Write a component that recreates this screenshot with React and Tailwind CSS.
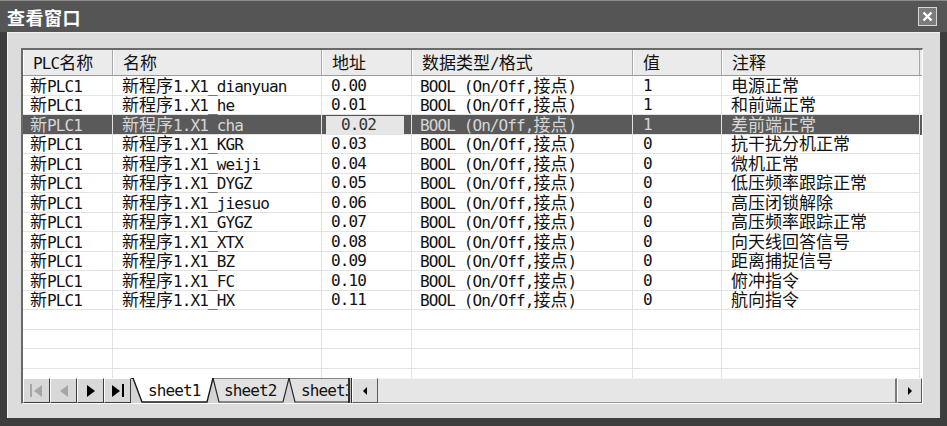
import React from "react";

const rows = [
  ["dianyuan", "0.00", "1", "电源正常"],
  ["he", "0.01", "1", "和前端正常"],
  ["cha", "0.02", "1", "差前端正常"],
  ["KGR", "0.03", "0", "抗干扰分机正常"],
  ["weiji", "0.04", "0", "微机正常"],
  ["DYGZ", "0.05", "0", "低压频率跟踪正常"],
  ["jiesuo", "0.06", "0", "高压闭锁解除"],
  ["GYGZ", "0.07", "0", "高压频率跟踪正常"],
  ["XTX", "0.08", "0", "向天线回答信号"],
  ["BZ", "0.09", "0", "距离捕捉信号"],
  ["FC", "0.10", "0", "俯冲指令"],
  ["HX", "0.11", "0", "航向指令"],
];

const cols = "grid grid-cols-[90px_209px_90px_221px_89px_198px]";

// SimSun-like mix: narrow half-width latin, full-width CJK
function Txt({ s }) {
  return (
    <span className="leading-[15px] whitespace-pre">
      {s.split(/([\u3000-\u9fff\uff00-\uffef]+)/).map((p, i) =>
        /[\u3000-\u9fff\uff00-\uffef]/.test(p) ? (
          <span key={i} className="font-['Noto_Sans_CJK_SC',sans-serif] text-[17px] tracking-normal">
            {p}
          </span>
        ) : (
          <span key={i}>{p}</span>
        )
      )}
    </span>
  );
}

function Cell({ children, className = "" }) {
  return (
    <div className={`h-full flex items-center border-r border-b border-[#e3e3e3] ${className}`}>
      {children}
    </div>
  );
}

function NavBtn({ children }) {
  return (
    <div className="w-[27px] h-full flex items-center justify-center bg-[#d8d8d8] border-t border-l border-white border-r border-b border-r-[#3c3c3c] border-b-[#3c3c3c]">
      {children}
    </div>
  );
}

function Tri({ dir = "right", color = "#000" }) {
  return (
    <svg width="10" height="14" viewBox="0 0 10 14">
      {dir === "right" ? <polygon points="1,1 9,7 1,13" fill={color} /> : <polygon points="9,1 1,7 9,13" fill={color} />}
    </svg>
  );
}

function Tabs() {
  return (
    <div className="relative w-[217px] h-full overflow-hidden bg-[#d4d4d4]">
      <svg className="absolute inset-0" width="217" height="25" viewBox="0 0 217 25">
        <line x1="0" y1="0.5" x2="217" y2="0.5" stroke="#3a3a3a" />
        <polygon points="158,0 164,24 236,24 242,0" fill="#e2e2e2" stroke="#2a2a2a" strokeWidth="1.2" />
        <polygon points="82,0 88,24 152,24 158,0" fill="#e2e2e2" stroke="#2a2a2a" strokeWidth="1.2" />
        <polygon points="2,0 11,24 76,24 82,0" fill="#ffffff" stroke="#1a1a1a" strokeWidth="1.4" />
        <line x1="3" y1="0.5" x2="81" y2="0.5" stroke="#ffffff" strokeWidth="1.5" />
      </svg>
      <div className="absolute inset-0 flex items-center whitespace-pre">
        <span className="absolute left-[17px]">sheet1</span>
        <span className="absolute left-[93px]">sheet2</span>
        <span className="absolute left-[170px]">sheet3</span>
      </div>
    </div>
  );
}

export default function App() {
  return (
    <div className="w-[947px] h-[426px] bg-[#3d3d3d] flex flex-col overflow-hidden font-['DejaVu_Sans_Mono',monospace] text-[16px] tracking-[-0.9px] leading-[19.5px] text-[#111]">
      {/* title bar */}
      <div className="h-[32px] shrink-0 flex items-center justify-between pl-[7px] pr-[10px] bg-[#555555] border-t border-[#8c8c8c]">
        <span className="font-['Noto_Sans_CJK_SC',sans-serif] font-bold text-[18px] leading-none text-white tracking-[0.5px]">
          查看窗口
        </span>
        <div className="w-[19px] h-[19px] flex items-center justify-center bg-[#7c7c7c] border border-[#d8d8d8]">
          <svg width="11" height="11" viewBox="0 0 11 11">
            <path d="M1.5 1.5 L9.5 9.5 M9.5 1.5 L1.5 9.5" stroke="#fff" strokeWidth="2.4" />
          </svg>
        </div>
      </div>

      {/* body */}
      <div className="w-[933px] h-[386px] ml-[7px] bg-[#dcdcdc] border-l border-t border-[#f2f2f2] pt-[15px] pl-[13px]">
        <div className="w-[902px] h-[356px] flex flex-col bg-white border-l-2 border-t-2 border-[#6a6a6a] border-r border-b border-r-white border-b-white">
          {/* header */}
          <div className={`${cols} h-[26px] shrink-0 bg-[#ebebeb] border-b border-[#9a9a9a]`}>
            {["PLC名称", "名称", "地址", "数据类型/格式", "值", "注释"].map((h) => (
              <div
                key={h}
                className="h-full flex items-center pl-[9px] border-r border-[#a8a8a8] border-l border-l-white"
              >
                <Txt s={h} />
              </div>
            ))}
          </div>

          {/* rows */}
          <div className="flex-1 flex flex-col overflow-hidden">
            {rows.map(([tag, addr, val, note], i) => {
              const sel = i === 2;
              return (
                <div
                  key={tag}
                  className={`${cols} h-[19.5px] shrink-0 ${sel ? "bg-[#5a5a5a] text-[#d6d6d6]" : ""}`}
                >
                  <Cell className="pl-[7px]">
                    <Txt s="新PLC1" />
                  </Cell>
                  <Cell className="pl-[9px]">
                    <Txt s={`新程序1.X1_${tag}`} />
                  </Cell>
                  <Cell className="pl-[9px]">
                    {sel ? (
                      <div className="h-full w-full flex items-center -ml-[7px] pl-[15px] mr-[1px] bg-[#e6e6e6] text-[#333] border-l-2 border-t border-[#555] border-t-dotted">
                        <Txt s={addr} />
                      </div>
                    ) : (
                      <Txt s={addr} />
                    )}
                  </Cell>
                  <Cell className="pl-[8px]">
                    <Txt s="BOOL (On/Off,接点)" />
                  </Cell>
                  <Cell className="pl-[10px]">
                    <Txt s={val} />
                  </Cell>
                  <Cell className="pl-[9px]">
                    <Txt s={note} />
                  </Cell>
                </div>
              );
            })}
            {[0, 1, 2].map((k) => (
              <div key={k} className={`${cols} h-[19.5px] shrink-0`}>
                {[0, 1, 2, 3, 4, 5].map((c) => (
                  <Cell key={c} />
                ))}
              </div>
            ))}
            <div className={`${cols} flex-1`}>
              {[0, 1, 2, 3, 4, 5].map((c) => (
                <div key={c} className="border-r border-[#e3e3e3]" />
              ))}
            </div>
          </div>

          {/* sheet tabs + scrollbar */}
          <div className="h-[25px] shrink-0 flex bg-[#d4d4d4]">
            <NavBtn>
              <div className="flex items-center gap-[1px]">
                <div className="w-[2px] h-[13px] bg-[#a6a6a6]" />
                <Tri dir="left" color="#a6a6a6" />
              </div>
            </NavBtn>
            <NavBtn>
              <Tri dir="left" color="#a6a6a6" />
            </NavBtn>
            <NavBtn>
              <Tri />
            </NavBtn>
            <NavBtn>
              <div className="flex items-center gap-[1px]">
                <Tri />
                <div className="w-[2px] h-[13px] bg-black" />
              </div>
            </NavBtn>
            <Tabs />
            <div className="w-[4px] h-full border-l-2 border-r border-[#2f2f2f] bg-[#bdbdbd]" />
            <div className="w-[26px] h-full flex items-center justify-center bg-[#dedede] border-t border-l border-white border-r border-b border-r-[#5a5a5a] border-b-[#5a5a5a]">
              <svg width="6" height="10" viewBox="0 0 6 10">
                <polygon points="5,1 1,5 5,9" fill="#000" />
              </svg>
            </div>
            <div className="flex-1 h-full bg-[#e6e6e6] border-t border-[#f4f4f4] border-r-2 border-b border-r-[#7a7a7a] border-b-[#9a9a9a]" />
            <div className="w-[25px] h-full flex items-center justify-center bg-[#dedede] border-t border-l border-white border-r border-b border-r-[#5a5a5a] border-b-[#5a5a5a]">
              <svg width="6" height="10" viewBox="0 0 6 10">
                <polygon points="1,1 5,5 1,9" fill="#000" />
              </svg>
            </div>
          </div>
        </div>
      </div>
    </div>
  );
}
